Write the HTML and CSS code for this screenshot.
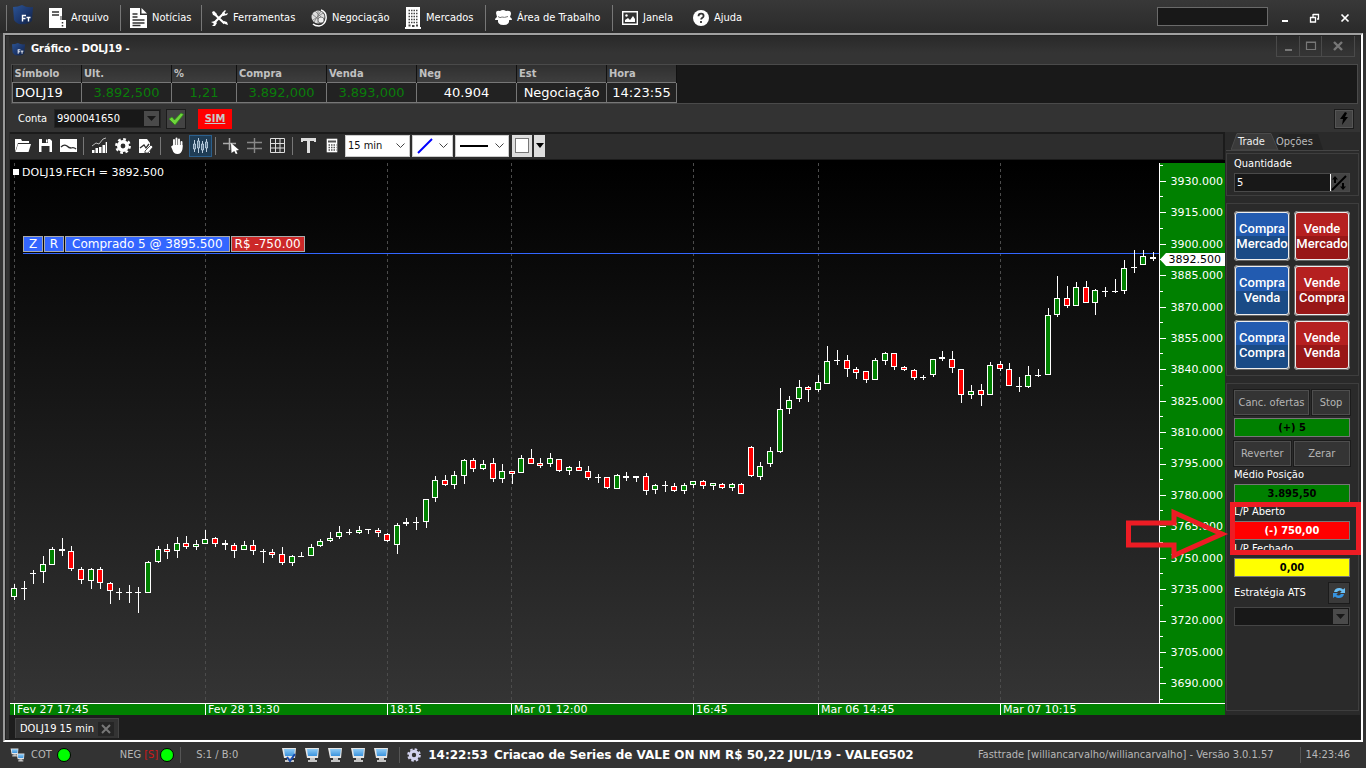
FILE: index.html
```html
<!DOCTYPE html>
<html lang="pt-BR">
<head>
<meta charset="utf-8">
<title>Fasttrade - DOLJ19</title>
<link rel="stylesheet" href="styles.css">
</head>
<body>
<svg class="defs" aria-hidden="true">
  <defs>
    <linearGradient id="logoFill" x1="0" y1="0" x2="1" y2="1"><stop offset="0" stop-color="#2c5596"/><stop offset=".6" stop-color="#1b3468"/><stop offset="1" stop-color="#14233f"/></linearGradient>
    <linearGradient id="screenFill" x1="0" y1="0" x2="0" y2="1"><stop offset="0" stop-color="#8fcbf5"/><stop offset="1" stop-color="#3b93dd"/></linearGradient>
    <symbol id="logo" viewBox="0 0 20 20"><path d="M0 2 Q5 2 9 0 Q14 3 20 2 L19 16 Q15 20 10 19 Q4 20 1 15Z" fill="url(#logoFill)"/><path d="M8.800 10.500h4.200M9.500 10.500v6M9.500 13.500h3M13.500 12.500h4M15.500 12.500v4" stroke="#fff" stroke-width="1.400" fill="none"/></symbol>
    <symbol id="monitor" viewBox="0 0 16 16"><path d="M1 1h14l-1 10H3z" fill="#e6e6e6"/><path d="M3 2h11l-1 7H4z" fill="url(#screenFill)"/><path d="M6 11h5v2h2v2H4v-2h2z" fill="#c4c4c4"/></symbol>
  </defs>
</svg>

<div class="app">
  <header class="menubar">
    <i class="edge"></i>
    <svg class="app-logo"><use href="#logo"/></svg>
    <nav class="menu">
      <button class="m-arquivo"><svg width="18" height="22" viewBox="0 0 18 22"><path d="M1 1h13v12h4v8H1z" fill="#fff"/><path d="M4 5h7M4 8h7" stroke="#333" stroke-width="1.500"/><path d="M14.500 15v1.500M14.500 18v1.500" stroke="#333" stroke-width="1.500"/><path d="M13 9v4" stroke="#333"/></svg>Arquivo</button>
      <button class="m-noticias"><svg width="17" height="20" viewBox="0 0 17 20"><path d="M0 0h10v7h7v13H0z" fill="#fff"/><path d="M11.500 0L17 5.500h-5.500z" fill="#fff"/><path d="M2.500 6h5M2.500 9h5M2.500 12h12M2.500 15h12M2.500 17.500h8" stroke="#333" stroke-width="1.300"/></svg>Notícias</button>
      <button class="m-ferramentas"><svg width="17" height="16" viewBox="0 0 17 16"><path d="M4 4.500L13.500 13.500M3.500 12.500L13.500 2.500" stroke="#fff" stroke-width="2.200"/><path d="M1 2l2-1 3 3-1 2-3-1zM14 0l-3 3 1 3 4-1 1-2-3 1-1-1 2-2zM13 11l3 1 1 3-3-1-2-2zM0 12l4-1 2 2-2 3H1l2-2-1-1z" fill="#fff"/></svg>Ferramentas</button>
      <button class="m-negociacao"><svg width="16" height="18" viewBox="0 0 16 18"><circle cx="7" cy="8" r="6.500" fill="#ddd"/><path d="M1 5l10 8M2 11L12 4M4 2l9 9M3 13L10 2M7 1v14" stroke="#777" stroke-width=".8"/><path d="M10 1q6 2 5 9-1 6-7 7-4 0-6-2" fill="none" stroke="#fff" stroke-width="1.500"/><circle cx="10" cy="11" r="3" fill="#eee" stroke="#666" stroke-width=".8"/></svg>Negociação</button>
      <button class="m-mercados"><svg width="16" height="22" viewBox="0 0 16 22"><path d="M1 0h14v20h1v2H0v-2h1z" fill="#fff"/><path d="M3.500 3.500h10M3.500 6.500h10M3.500 9.500h10M3.500 12.500h10M3.500 15.500h10" stroke="#444" stroke-width="1.600" stroke-dasharray="1.500 1"/><path d="M3.500 18.500h2M7 19h2.500M11 18.500h2" stroke="#444" stroke-width="2"/></svg>Mercados</button>
      <button class="m-area"><svg width="17" height="16" viewBox="0 0 17 16"><path d="M1 3q0-3 4-2 3-2 6 0 5-1 5 3l-1 3q2 1 2 3H0q0-2 2-3z" fill="#fff"/><path d="M3 9q-1 6 5.500 6T14 9z" fill="#fff"/><path d="M3 6.500q2 2 4 .5 2 1 6-.5" stroke="#777" fill="none"/></svg>Área de Trabalho</button>
      <button class="m-janela"><svg width="16" height="14" viewBox="0 0 16 14"><path d="M.7.700h14.600v12.600H.7z" fill="none" stroke="#fff" stroke-width="1.400"/><circle cx="4.500" cy="4.500" r="1.200" fill="#fff"/><path d="M3 11V9l3-2 2 2 3-4 2 3v3z" fill="#fff"/></svg>Janela</button>
      <button class="m-ajuda"><svg width="16" height="16" viewBox="0 0 16 16"><circle cx="8" cy="8" r="8" fill="#fff"/><path d="M5.500 6.200q0-2.500 2.600-2.500 2.500 0 2.500 2.200 0 1.200-1.500 2-1 .6-1 1.600M8 11v2" fill="none" stroke="#333" stroke-width="1.800"/></svg>Ajuda</button>
    </nav>
    <input class="search" aria-label="Buscar">
    <div class="window-controls">
      <button aria-label="Minimizar"><svg width="12" height="12"><path d="M3 9h6" stroke="#fff" stroke-width="2"/></svg></button>
      <button aria-label="Restaurar"><svg width="12" height="12"><path d="M4 2.500h6M4 2v3M9.500 2v5H8M1 5.500h6M1.500 5v5h5V5" stroke="#fff" stroke-width="1.300" fill="none"/></svg></button>
      <button aria-label="Fechar"><svg width="12" height="12"><path d="M2.500 2.500l7 7M9.500 2.500l-7 7" stroke="#fff" stroke-width="1.700"/></svg></button>
    </div>
  </header>

  <main class="workspace">
    <div class="titlebar">
      <svg class="title-logo"><use href="#logo"/></svg>
      <h1>Gráfico - DOLJ19 -</h1>
      <div class="doc-controls">
        <button class="dc-min" aria-label="Minimizar gráfico"><svg width="12" height="12"><path d="M3 10h7" stroke="#777" stroke-width="2"/></svg></button>
        <button class="dc-max" aria-label="Maximizar gráfico"><svg width="12" height="12"><path d="M1.500 2h9v7.500h-9zM1 2.500h10" fill="none" stroke="#777" stroke-width="1.200"/></svg></button>
        <button class="dc-close" aria-label="Fechar gráfico"><svg width="12" height="12"><path d="M2 2l8 8M10 2l-8 8" stroke="#777" stroke-width="2.400"/></svg></button>
      </div>
    </div>

    <div class="quote">
      <table>
        <colgroup><col class="c69"><col class="c90"><col class="c65"><col class="c90"><col class="c90"><col class="c100"><col class="c90"><col class="c70"></colgroup>
        <thead><tr><th>Símbolo</th><th>Ult.</th><th>%</th><th>Compra</th><th>Venda</th><th>Neg</th><th>Est</th><th>Hora</th></tr></thead>
        <tbody><tr><td class="left">DOLJ19</td><td class="up">3.892,500</td><td class="up">1,21</td><td class="up">3.892,000</td><td class="up">3.893,000</td><td>40.904</td><td>Negociação</td><td>14:23:55</td></tr></tbody>
      </table>
    </div>

    <div class="account">
      <label for="conta">Conta</label>
      <div class="combo conta"><select id="conta"><option>9900041650</option></select><svg width="9" height="5"><path d="M0 0h9L4.500 5z" fill="#181818"/></svg></div>
      <button class="ok" aria-label="Confirmar conta"><svg width="16" height="14"><path d="M1 7l3-2 2.500 3L13 1l2.500 1.500L7 13z" fill="#6fd43c" stroke="#2f8a16" stroke-width=".8"/></svg></button>
      <a class="sim" href="#">SIM</a>
      <button class="bolt" aria-label="Ordem rápida"><svg width="8" height="13"><path d="M5 0L0 7h3l-1 6 6-8H5l2-4z" fill="#000"/></svg></button>
    </div>

    <div class="body">
      <section class="chart-side">
        <div class="toolbar">
          <button aria-label="Abrir"><svg width="17" height="15"><path d="M1 14V1h6l1 2h7v2H4z" fill="#fff"/><path d="M4 6h13l-2.500 8H1.500z" fill="#fff"/></svg></button>
          <button aria-label="Salvar"><svg width="15" height="15"><path d="M1 1h11l2 2v11H1z" fill="#fff"/><path d="M4 1h6v4H4zM3.500 8h8v6h-8z" fill="#2c2c2c"/><path d="M8 1.500h1.500v3H8z" fill="#fff"/></svg></button>
          <button aria-label="Imagem"><svg width="17" height="14"><path d="M0 0h17v13H0z" fill="#fff"/><path d="M1 8q3-3 6-1 2 2 4 2 3-1 5 1" stroke="#2c2c2c" fill="none" stroke-width="1.300"/></svg></button>
          <i class="sep"></i>
          <button aria-label="Indicadores"><svg width="17" height="17"><path d="M1 13h2.500v3H1zM4.500 11H7v5H4.500zM8 10h2.500v6H8zM11.500 8H14v8h-2.500zM14.700 5H16v11h-1.300z" fill="#fff"/><path d="M1 9l4-3 3 1 4-5 3-1" stroke="#bbb" fill="none"/></svg></button>
          <button aria-label="Configurar"><svg width="16" height="16"><circle cx="8" cy="8" r="4.200" fill="none" stroke="#fff" stroke-width="3.600"/><circle cx="8" cy="8" r="6.700" fill="none" stroke="#fff" stroke-width="2.400" stroke-dasharray="2.700 2.560"/></svg></button>
          <button aria-label="Editar estudo"><svg width="15" height="16"><path d="M1 1h8l3 4v10H1z" fill="#fff"/><path d="M2 10l4-3 2 3 3-4" stroke="#2c2c2c" stroke-width="1.300" fill="none"/><path d="M7 13l6-6 2 2-5 6H7z" fill="#fff" stroke="#2c2c2c" stroke-width=".8"/></svg></button>
          <i class="sep"></i>
          <button aria-label="Mover"><svg width="14" height="17"><path d="M4 9V3M6.500 9V1.500M9 9V2.500M11.500 10V5" stroke="#fff" stroke-width="1.900" stroke-linecap="round"/><path d="M3 8h9.500v4q-1 5-5 5t-5-4L1 9.500l1-.5z" fill="#fff"/></svg></button>
          <button class="active" aria-label="Candles"><svg width="17" height="16"><path d="M2.500 2v12M6.500 0v15M10.500 3v12M14.500 1v13" stroke="#bcd"/><path d="M1.500 6h2v5h-2zM5.500 3h2v7h-2zM9.500 6h2v6h-2zM13.500 4h2v6h-2z" fill="#5b7890" stroke="#cde" stroke-width=".8"/></svg></button>
          <i class="sep"></i>
          <button aria-label="Cursor"><svg width="17" height="16"><path d="M6.500 0v12M0 5.500h13" stroke="#aaa" stroke-width="1.500"/><path d="M8 5l8 7-3 .5 1.500 3-1.700.5-1.500-3L8.500 15z" fill="#fff"/></svg></button>
          <button aria-label="Cruz"><svg width="16" height="15"><path d="M7.500 0v15M0 4.500h15M0 10.500h15" stroke="#888" stroke-width="1.400"/></svg></button>
          <button aria-label="Grade"><svg width="16" height="16"><path d="M.5.500h14v14H.5zM5.500 1v14M10 1v14M1 5.500h14M1 10h14" fill="none" stroke="#ddd"/></svg></button>
          <i class="sep"></i>
          <button aria-label="Texto"><svg width="15" height="16"><path d="M0 0h15v4h-2V3H9v12H6V3H2v1H0z" fill="#ddd"/></svg></button>
          <button aria-label="Calculadora"><svg width="12" height="15"><path d="M.7.700h10.600v13.600H.7z" fill="#fff"/><path d="M2 3.500h8" stroke="#555" stroke-width="2"/><path d="M2.500 7h8M2.500 9.500h8M2.500 12h8" stroke="#555" stroke-width="1.300" stroke-dasharray="1.500 1"/></svg></button>
          <div class="pick period"><select aria-label="Periodicidade"><option>15 min</option></select><svg class="chev" width="9" height="6"><path d="M.5.500l4 4 4-4" fill="none" stroke="#444"/></svg></div>
          <div class="pick stroke-color"><select aria-label="Cor da linha"><option></option></select><svg class="sample" width="16" height="16"><path d="M1 15L15 1" stroke="#00f" stroke-width="2"/></svg><svg class="chev" width="9" height="6"><path d="M.5.500l4 4 4-4" fill="none" stroke="#444"/></svg></div>
          <div class="pick stroke-width"><select aria-label="Espessura"><option></option></select><svg class="sample" width="28" height="2"><path d="M0 1h28" stroke="#000" stroke-width="2"/></svg><svg class="chev" width="9" height="6"><path d="M.5.500l4 4 4-4" fill="none" stroke="#444"/></svg></div>
          <button class="fill" aria-label="Preenchimento"><span></span></button>
          <button class="fill-more" aria-label="Mais cores"><svg width="8" height="5"><path d="M0 0h8L4 5z" fill="#000"/></svg></button>
        </div>

        <div class="chart">
          <div class="plot">
            <svg id="plot" viewBox="10 163 1149 540" preserveAspectRatio="none" shape-rendering="crispEdges"></svg>
            <div class="legend">DOLJ19.FECH = 3892.500</div>
            <div class="position"><button>Z</button><button>R</button><span class="pos-info">Comprado 5 @ 3895.500</span><span class="pos-pl">R$ -750.00</span></div>
          </div>
          <div class="prices">
            <svg id="ticks" viewBox="0 163 8 540" preserveAspectRatio="none" shape-rendering="crispEdges"></svg>
            <ol><li>3930.000</li><li>3915.000</li><li>3900.000</li><li>3885.000</li><li>3870.000</li><li>3855.000</li><li>3840.000</li><li>3825.000</li><li>3810.000</li><li>3795.000</li><li>3780.000</li><li>3765.000</li><li>3750.000</li><li>3735.000</li><li>3720.000</li><li>3705.000</li><li>3690.000</li></ol>
            <div class="last">3892.500</div>
          </div>
          <div class="times"><span class="first"></span><span>Fev 27 17:45</span><span>Fev 28 13:30</span><span>18:15</span><span>Mar 01 12:00</span><span>16:45</span><span>Mar 06 14:45</span><span>Mar 07 10:15</span></div>
        </div>
      </section>

      <aside class="trade">
        <div class="tabs">
          <svg class="tab-shape" width="96" height="17"><path d="M44 17L48 1h39l5 16z" fill="#232323"/><path d="M0 17L6 .5h34l7 16.500z" fill="#3a3a3a" stroke="#4a4a4a"/></svg>
          <button class="on">Trade</button><button>Opções</button>
        </div>
        <div class="group qty">
          <label for="qtd">Quantidade</label>
          <div class="spin"><input id="qtd" value="5"><button aria-label="Alterar quantidade"><svg width="16" height="16"><path d="M1 15L15 1" stroke="#000" stroke-width="2"/><path d="M4 1L1 4.500h2V8h2V4.500h2zM12 15l3-3.500h-2V8h-2v3.500H9z" fill="#000"/></svg></button></div>
        </div>
        <div class="group orders">
          <button class="buy">Compra<br>Mercado</button><button class="sell">Vende<br>Mercado</button>
          <button class="buy">Compra<br>Venda</button><button class="sell">Vende<br>Compra</button>
          <button class="buy">Compra<br>Compra</button><button class="sell">Vende<br>Venda</button>
        </div>
        <div class="group status">
          <div class="row wide-left"><button>Canc. ofertas</button><button>Stop</button></div>
          <output class="val green">(+) 5</output>
          <div class="row"><button>Reverter</button><button>Zerar</button></div>
          <div class="label">Médio Posição</div>
          <output class="val green">3.895,50</output>
          <div class="open-pl">
            <div class="label">L/P Aberto</div>
            <output class="val red">(-) 750,00</output>
            <svg class="callout" width="240" height="60"><path d="M106.500 2.500h126v48h-126zM2.500 21h45.500V10.500L96 32 48 53.500V43H2.500z" fill="none" stroke="#ed1c24" stroke-width="5"/></svg>
          </div>
          <div class="label">L/P Fechado</div>
          <output class="val yellow">0,00</output>
          <div class="ats"><label for="ats">Estratégia ATS</label><button aria-label="Atualizar estratégias"><svg width="14" height="14"><path d="M2 6q1-4.500 6-4 2 .3 3 1.500L13 2v5H8l1.600-1.600Q7.500 3.300 5 6z" fill="#6bc0f5"/><path d="M12 8q-1 4.500-6 4-2-.3-3-1.500L1 12V7h5L4.400 8.600Q6.500 10.700 9 8z" fill="#3593e0"/></svg></button></div>
          <div class="combo"><select id="ats"><option></option></select><svg width="9" height="5"><path d="M0 0h9L4.500 5z" fill="#181818"/></svg></div>
        </div>
      </aside>
    </div>

    <div class="doc-tabs"><div class="doc-tab"><span>DOLJ19 15 min</span><button aria-label="Fechar aba"><svg width="10" height="10"><path d="M1 1l8 8M9 1L1 9" stroke="#777" stroke-width="2"/></svg></button></div></div>
  </main>

  <footer class="statusbar">
    <svg class="net" width="15" height="14"><use href="#monitor" width="9" height="9"/><use href="#monitor" x="6" y="5" width="9" height="9"/></svg>
    <span>COT</span><i class="led"></i>
    <span class="neg">NEG <b>[S]</b></span><i class="led"></i>
    <i class="sep"></i>
    <span class="sb">S:1 / B:0</span>
    <div class="monitors">
      <svg><use href="#monitor"/><path d="M6 10l3 4 5-7" fill="none" stroke="#1748a8" stroke-width="2"/></svg><svg><use href="#monitor"/></svg><svg><use href="#monitor"/></svg><svg><use href="#monitor"/></svg><svg><use href="#monitor"/></svg>
    </div>
    <i class="sep"></i>
    <svg class="gear" width="14" height="14"><circle cx="7" cy="7" r="3.700" fill="none" stroke="#d4d4f0" stroke-width="3"/><circle cx="7" cy="7" r="5.800" fill="none" stroke="#d4d4f0" stroke-width="2" stroke-dasharray="2.500 2.050"/></svg>
    <div class="news"><time>14:22:53</time><span>Criacao de Series de VALE ON NM R$ 50,22 JUL/19 - VALEG502</span></div>
    <span class="version">Fasttrade [williancarvalho/williancarvalho] - Versão 3.0.1.57</span>
    <i class="sep"></i>
    <time class="clock">14:23:46</time>
  </footer>
</div>
<script src="chart.js"></script>
</body>
</html>
```

FILE: styles.css
```css
* { box-sizing: border-box; }
body { margin: 0; background: #333; color: #fff; font: 11px/14px "DejaVu Sans Condensed", "Noto Sans", sans-serif; }
button, input, select { font: inherit; color: inherit; margin: 0; padding: 0; border: 0; background: none; border-radius: 0; }
select { appearance: none; outline: 0; }
svg { display: block; flex: none; }
.defs { position: absolute; width: 0; height: 0; }
.app { display: flex; flex-direction: column; height: 100vh; min-height: 760px; }

.menubar { display: flex; align-items: center; height: 33px; flex: none; background: linear-gradient(#383838, #2a2a2a); padding: 3px 8px 0 6px; }
.edge { width: 1px; height: 26px; margin-right: 6px; background: #777; }
.app-logo { width: 20px; height: 20px; margin: -6px 12px 0 0; }
.menu { display: flex; flex: 1; align-items: center; }
.menu button { display: flex; align-items: center; height: 26px; gap: 5px; white-space: nowrap; }
.m-arquivo, .m-noticias, .m-mercados, .m-area { border-right: 1px solid #777; }
.menu .m-arquivo { width: 76px; padding-left: 3px; }
.m-noticias { width: 81px; padding-left: 9px; }
.m-ferramentas { width: 109px; padding-left: 9px; }
.m-negociacao { width: 94px; }
.m-mercados { width: 81px; }
.m-area { width: 127px; padding-left: 9px; }
.m-janela { width: 80px; padding-left: 9px; }
.search { width: 111px; height: 19px; margin: -3px 3px 0 0; background: #181818; border: 1px solid #6a6a6a; }
.window-controls { display: flex; gap: 18px; padding: 0 7px 0 8px; }

.workspace { flex: 1; min-height: 0; display: flex; flex-direction: column; margin: 0 3px 0 3px; border: 2px solid #fff; border-color: #a0a0a0 #fff #fff #999; padding: 1px 1px 1px 4px; background: #333; outline: 1px solid #222; outline-offset: -3px; }
.titlebar { display: flex; align-items: center; height: 28px; flex: none; padding: 0 0 2px 3px; background: linear-gradient(#292929, #343434 60%); }
.title-logo { width: 13px; height: 13px; }
h1 { flex: 1; margin: 0 0 0 6px; font-size: 11px; line-height: 14px; }
.doc-controls { display: flex; align-self: flex-start; margin-right: 5px; border: 1px solid #4a4a4a; border-top: 0; }
.doc-controls button { display: flex; justify-content: center; align-items: center; height: 20px; }
.doc-controls button + button { border-left: 1px solid #4a4a4a; }
.dc-min, .dc-max { width: 22px; }
.dc-close { width: 33px; }

.quote { flex: none; height: 40px; margin: 0 2px 0 2px; border: 1px solid #4a4a4a; background: #191919; }
table { border-collapse: collapse; table-layout: fixed; width: 664px; }
.c69 { width: 69px; } .c70 { width: 70px; } .c90 { width: 90px; } .c65 { width: 65px; } .c100 { width: 100px; }
th { height: 17px; padding: 1px 3px 0 2px; text-align: left; line-height: 16px; color: #c0c0c0; background: linear-gradient(#303030, #3d3d3d); border-right: 1px solid #111; }
td { height: 20px; padding: 0 2px; text-align: center; font: 13px/18px "DejaVu Sans", sans-serif; background: #222; border: 1px solid #777; white-space: nowrap; }
td.left { text-align: left; }
.up { color: #0a7d0a; }

.account { display: flex; align-items: center; height: 28px; flex: none; padding: 1px 6px 0 9px; }
.account label { width: 36px; }
.combo { display: grid; grid-template-columns: 1fr 16px; height: 19px; border: 1px solid #454545; background: #181818; }
.combo select { grid-area: 1 / 1 / 2 / 3; padding-left: 2px; }
.combo svg { grid-area: 1 / 2; place-self: stretch; width: 15px; height: 15px; margin: 1px 0 0; padding: 5px 3px; background: #4a4a4a; pointer-events: none; }
.conta { width: 107px; border-color: #242424; }
.ok, .bolt { display: flex; justify-content: center; align-items: center; width: 20px; height: 20px; border: 1px solid #1c1c1c; background: #434343; }
.ok { margin-left: 5px; }
.sim { display: block; width: 34px; margin-left: 12px; line-height: 20px; text-align: center; background: #f00; color: #c8c8c8; font-weight: bold; }
.bolt { margin-left: auto; outline: 1px solid #555; outline-offset: -2px; }

.body { flex: 1; min-height: 0; display: flex; background: #2a2a2a; }
.chart-side { flex: 1; min-width: 0; display: flex; flex-direction: column; margin-left: 1px; }
.toolbar { display: flex; align-items: center; height: 28px; flex: none; padding: 0 0 2px 1px; border: 1px solid #1b1b1b; border-width: 2px 2px 1px 0; background: #2d2d2d; }
.toolbar button { display: flex; justify-content: center; align-items: center; width: 23px; height: 22px; flex: none; }
.sep { width: 1px; height: 18px; margin: 0 4px 0 3px; background: #777; flex: none; }
.toolbar .active { background: #1f3d56; border: 1px solid #2b5f8c; margin-left: 1px; }
.pick { display: grid; align-items: center; margin-right: 2px; height: 22px; background: #fff; color: #111; border: 1px solid #ccc; }
.pick > * { grid-area: 1 / 1; }
.pick select { width: 100%; height: 100%; padding-left: 2px; }
.pick svg { pointer-events: none; }
.chev { justify-self: end; margin-right: 4px; }
.sample { margin-left: 4px; }
.period { width: 65px; margin-left: 2px; }
.stroke-color { width: 41px; }
.stroke-width { width: 54px; }
.toolbar .fill { width: 20px; background: #ddd; margin-left: 1px; }
.fill span { width: 14px; height: 15px; border: 1px solid #777; background: #fff; }
.toolbar .fill-more { width: 11px; margin-left: 2px; background: #ddd; }

.chart { flex: 1; min-height: 0; display: grid; grid-template-columns: 1fr 66px; grid-template-rows: 1fr 12px; border-top: 3px solid #000; font: 11px/12px "DejaVu Sans", sans-serif; }
.plot { position: relative; min-height: 0; background: linear-gradient(#000, #343434); }
#plot { position: absolute; width: 100%; height: 100%; }
.legend { position: absolute; left: 12px; top: 4px; }
.legend::before { content: ""; position: absolute; left: -9px; top: 2px; width: 6px; height: 6px; background: #fff; }
.position { position: absolute; left: 13px; top: 73px; display: flex; gap: 1px; font-size: 12px; }
.position > * { height: 16px; border: 1px solid #aaa; background: #3366ff; line-height: 14px; }
.position button { width: 20px; }
.position .pos-info { padding: 0 6px; }
.position .pos-pl { background: #cc2828; padding: 0 3px; }
.prices { position: relative; background: #008000; min-height: 0; }
#ticks { position: absolute; width: 8px; height: 100%; }
.prices ol { display: flex; flex-direction: column; justify-content: space-between; height: 100%; margin: 0; padding: 10px 2px 10px 0; list-style: none; text-align: right; line-height: 18px; }
.last { position: absolute; left: 1px; right: 0; top: 90px; padding-right: 4px; line-height: 13px; text-align: right; color: #000; background: #fff; clip-path: polygon(0 50%, 6px 0, 100% 0, 100% 100%, 6px 100%); }
.times { grid-column: 1 / 3; display: grid; grid-template-columns: 4fr 191fr 182fr 124fr 182fr 125fr 182fr 225fr; background: #008000; border-top: 1px solid #fff; line-height: 12px; }
.times span { border-left: 1px solid #fff; padding-left: 2px; white-space: nowrap; }
.times .first { border: 0; padding: 0; }

.trade { width: 135px; flex: none; display: flex; flex-direction: column; padding: 1px 1px 4px 1px; }
.tabs { display: grid; grid-template-columns: 11px 38px 46px 1fr; height: 18px; margin-bottom: 2px; border-bottom: 1px solid #454545; padding-left: 1px; }
.tab-shape { grid-area: 1 / 1 / 2 / 5; margin-left: 4px; }
.tabs button { grid-row: 1; grid-column: 3; text-align: left; color: #bbb; }
.tabs .on { grid-column: 2; color: #eee; }
.group { border: 1px solid #3e3e3e; padding: 6px 8px 0 7px; margin-bottom: 7px; }
.qty { height: 43px; flex: none; padding-top: 3px; }
.spin { display: flex; height: 19px; margin-top: 2px; border: 1px solid #4a4a4a; background: #181818; }
.spin input { flex: 1; min-width: 0; padding-left: 2px; border-right: 1px solid #fff; }
.spin button { width: 18px; background: #444; }
.orders { display: grid; grid-template-columns: repeat(2, minmax(0, 1fr)); gap: 4px; height: 173px; flex: none; padding: 7px 8px 5px 7px; }
.orders button { border: 2px solid #eee; border-radius: 4px; outline: 1px solid #666; outline-offset: -1px; font: 500 13px/15px Roboto, sans-serif; }
.buy { background: linear-gradient(#225bb0 50%, #1a4b86 50%); }
.sell { background: linear-gradient(#b52020 50%, #981717 50%); }
.status { flex: 1; margin-bottom: 0; }
.row { display: grid; grid-template-columns: 1fr 1fr; gap: 3px; height: 25px; margin-bottom: 3px; }
.row.wide-left { grid-template-columns: 75px 1fr; }
.row button { border: 1px solid #4e4e4e; background: #343434; outline: 1px solid #1b1b1b; color: #b4b4b4; }
.val { display: block; height: 19px; border: 1px solid #777; text-align: center; line-height: 17px; font-weight: bold; color: #000; }
.val + .row { margin: 4px 0 0; }
.label { line-height: 18px; white-space: nowrap; }
.green { background: #008000; }
.red { background: #f00; color: #fff; }
.yellow { background: #ff0; }
.open-pl { position: relative; }
.callout { position: absolute; left: -108px; top: -1px; pointer-events: none; z-index: 2; }
.ats { display: flex; justify-content: space-between; align-items: center; height: 22px; margin: 5px 0 3px; }
.ats button { display: flex; justify-content: center; align-items: center; width: 22px; height: 22px; border: 1px solid #1b1b1b; background: #3a3a3a; }

.doc-tabs { height: 24px; flex: none; padding-left: 6px; background: #1d1d1d; }
.doc-tab { display: inline-flex; align-items: center; height: 20px; margin-top: 3px; padding: 0 4px; background: #333; border: 1px solid #444; border-bottom: 0; }
.doc-tab button { display: flex; align-items: center; justify-content: center; width: 16px; height: 14px; margin-left: 4px; background: #252525; }

.statusbar { display: flex; align-items: center; height: 26px; flex: none; padding: 0 16px 0 10px; color: #b8b8b8; white-space: nowrap; }
.net { margin-right: 6px; }
.led { width: 14px; height: 14px; margin-left: 5px; border: 1px solid #000; border-radius: 50%; background: #0f0; }
.neg { margin-left: 49px; }
.neg + .led { margin-left: 2px; }
.neg b { color: #d01818; font-weight: normal; }
.statusbar .sep { background: #555; margin: 0 6px; height: 16px; }
.sb { margin: 0 43px 0 9px; }
.monitors { display: flex; gap: 7px; margin-right: 4px; }
.monitors svg { width: 16px; height: 16px; }
.gear { margin: 0 7px 0 1px; }
.news { display: flex; gap: 6px; flex: 0 1 498px; min-width: 0; overflow: hidden; color: #fff; font: bold 12px/16px "DejaVu Sans", sans-serif; }
.version { margin-left: auto; }
.statusbar .version + .sep { margin: 0 5px 0 26px; }
```

FILE: chart.js
```javascript
// Each candle: high, body top, body bottom, low, kind (g = up, r = down, w = flat)
const candles = `584,588,597,600,g 581,588,589,600,w 570,573,574,584,w 556,564,572,583,g 547,549,565,565,g
538,549,551,556,w 546,551,569,571,r 567,569,580,584,r 568,569,581,589,g 567,569,583,589,r
582,583,591,604,r 588,592,593,600,w 585,592,593,603,w 587,592,593,613,w 561,562,593,593,g
546,549,562,563,g 544,549,552,559,r 537,543,551,558,g 536,543,547,549,r 540,544,547,550,g
530,539,544,544,g 537,538,544,547,r 540,543,545,550,w 543,545,551,558,r 541,545,550,550,g
540,545,551,555,r 549,551,552,563,w 549,552,555,558,r 547,554,563,565,r 555,556,563,566,g
552,556,557,557,w 544,547,556,556,g 539,541,546,547,g 532,538,541,542,g 526,532,537,539,g
529,532,533,535,w 526,530,533,534,g 529,529,530,534,w 528,530,533,537,r 533,534,541,542,r
523,525,545,554,g 518,522,524,526,w 517,522,523,530,w 499,499,522,528,g 476,480,498,502,g
475,480,485,486,r 471,475,485,489,g 459,460,476,484,g 458,460,469,472,r 460,464,469,470,g
458,463,479,482,r 464,471,479,483,g 471,471,474,484,r 455,458,473,473,g 449,458,464,464,r
458,463,466,468,r 453,458,464,467,g 459,459,471,472,r 466,467,471,475,g 461,467,471,471,r
466,471,478,480,r 474,477,478,483,w 477,477,488,489,r 474,475,489,489,g 472,476,478,481,w
476,476,478,482,w 473,476,491,495,r 484,485,490,494,g 481,485,486,492,w 483,486,491,492,r
483,485,491,494,g 481,481,485,488,g 480,481,486,489,r 483,483,486,490,g 483,484,488,489,r
483,484,488,491,g 483,484,494,494,r 446,447,476,477,r 462,466,477,480,g 447,451,464,467,g
388,409,452,453,g 396,400,409,414,g 380,387,399,402,g 386,387,390,402,r 375,382,390,392,g
346,361,384,384,g 350,360,361,365,w 355,360,369,377,r 367,369,373,379,r 371,371,380,383,r
358,360,380,380,g 352,353,361,365,g 353,353,367,370,r 366,367,370,371,r 369,370,378,380,r
375,377,378,380,w 359,359,375,377,g 351,357,359,361,w 351,359,368,373,r 369,369,395,403,r
385,391,395,399,g 384,390,395,406,r 362,365,395,395,g 361,364,369,371,r 363,369,386,386,r
377,386,387,392,w 366,375,387,388,g 369,375,376,377,w 308,315,375,375,g 276,298,315,317,g
286,298,306,308,r 282,287,306,306,g 281,287,303,303,r 289,290,303,315,g 287,291,292,297,w
279,291,292,293,w 260,268,291,294,g 250,267,268,273,w 250,256,265,265,g 252,257,259,261,w`
  .split(/\s+/).map(c => c.split(','));

const colors = { g: '#008000', r: '#ff0000' };
const rect = (x, y, w, h, fill) => `<rect x="${x}" y="${y}" width="${w}" height="${h}" fill="${fill}"/>`;

let out = '';
for (const x of [14, 205, 387, 511, 693, 818, 1000]) {
  out += `<path d="M${x}.5 163V703" stroke="#4c4c4c" stroke-dasharray="3 3"/>`;
}
out += rect(23, 253, 1136, 1, '#3366ff');
candles.forEach(([high, top, bottom, low, kind], i) => {
  const x = Math.round(14 + i * 9.57);
  out += rect(x, high, 1, low - high, '#fff');
  out += rect(x - 3, top, 6, bottom - top, '#fff');
  if (colors[kind]) out += rect(x - 2, +top + 1, 4, bottom - top - 2, colors[kind]);
});
document.getElementById('plot').innerHTML = out;

let marks = rect(0, 163, 1, 540, '#fff');
for (let i = 0; i < 17; i++) {
  const y = Math.round(181 + i * 31.4);
  marks += rect(0, y, 7, 1, '#fff') + rect(0, y - 16, 4, 1, '#fff');
}
marks += rect(0, 699, 4, 1, '#fff');
document.getElementById('ticks').innerHTML = marks;
```
